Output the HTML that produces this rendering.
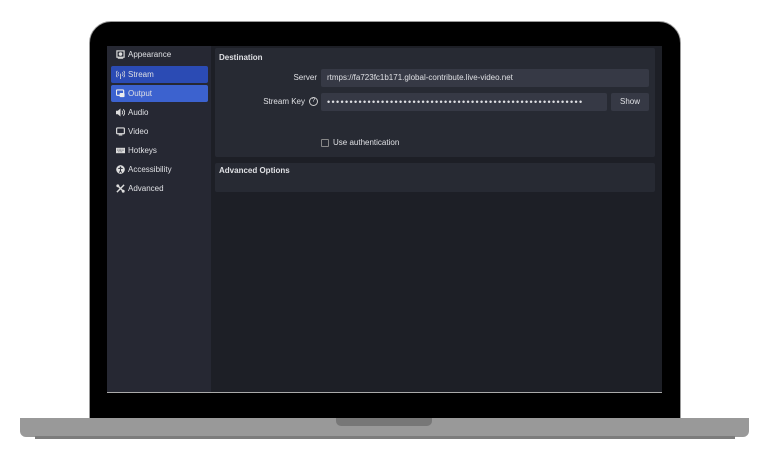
<!DOCTYPE html>
<html><head><style>
*{margin:0;padding:0;box-sizing:border-box}
body{width:768px;height:460px;background:#fff;position:relative;overflow:hidden;font-family:"Liberation Sans",sans-serif;font-size:8px;color:#dfe0e4}
.abs{position:absolute}
.lid{left:89px;top:21px;width:592px;height:400px;background:#000;border-radius:22px 22px 0 0;border:1px solid #9a9a9a}
.screen{left:107px;top:46px;width:555px;height:347px;background:#1d1f26;border-bottom:1px solid #aaa}
.side{left:107px;top:46px;width:104px;height:346px;background:#262833}
.item{position:absolute;left:111px;width:97px;height:17px;line-height:17px;padding-left:17px;border-radius:2px}
.ic{position:absolute;left:5px;top:4px;width:9px;height:9px}
.panel{background:#272a33;border-radius:2px}
.inp{background:#363945;border-radius:2px;height:18px;line-height:18px;padding-left:6px}
.lbl{text-align:right;width:100px;line-height:18px}
</style></head><body>
<div class="abs lid"></div>
<div class="abs screen"></div>
<div class="abs side"></div>
<div class="item" style="top:46px;"><svg class="ic" viewBox="0 0 10 10"><rect x="1" y="1" width="8" height="7" fill="none" stroke="#ddd" stroke-width="1.3"/><circle cx="5" cy="4.5" r="2" fill="#ddd"/><rect x="2" y="8.5" width="6" height="1.2" fill="#ddd"/></svg>Appearance</div>
<div class="item" style="top:66px;background:#2b4bb4"><svg class="ic" viewBox="0 0 10 10"><path d="M5 4v6M3 2.5a3 3 0 0 0 0 4M7 2.5a3 3 0 0 1 0 4M1.5 1a5 5 0 0 0 0 7M8.5 1a5 5 0 0 1 0 7" fill="none" stroke="#ddd" stroke-width=".9"/></svg>Stream</div>
<div class="item" style="top:85px;background:#3c62cf"><svg class="ic" viewBox="0 0 10 10"><rect x=".5" y="1" width="8" height="6" rx="1" fill="none" stroke="#eee" stroke-width="1.3"/><rect x="4" y="4.5" width="5.5" height="4.5" rx="1" fill="#eee"/></svg>Output</div>
<div class="item" style="top:104px;"><svg class="ic" viewBox="0 0 10 10"><path d="M0 3h2l3-2.5v9L2 7H0z" fill="#ddd"/><path d="M6.5 3a2.5 2.5 0 0 1 0 4M8 1.5a4.5 4.5 0 0 1 0 7" fill="none" stroke="#ddd" stroke-width="1"/></svg>Audio</div>
<div class="item" style="top:123px;"><svg class="ic" viewBox="0 0 10 10"><rect x=".7" y="1" width="8.6" height="6.5" rx="1" fill="none" stroke="#ddd" stroke-width="1.3"/><rect x="3" y="8.3" width="4" height="1.2" fill="#ddd"/></svg>Video</div>
<div class="item" style="top:142px;"><svg class="ic" viewBox="0 0 10 10"><rect x="0" y="2" width="10" height="6" fill="#ddd"/><path d="M1.5 3.5h7M1.5 5h7M2.5 6.5h5" stroke="#262833" stroke-width=".6" stroke-dasharray="1 .6"/></svg>Hotkeys</div>
<div class="item" style="top:161px;"><svg class="ic" viewBox="0 0 10 10"><circle cx="5" cy="5" r="4.8" fill="#ddd"/><circle cx="5" cy="2.6" r=".9" fill="#262833"/><path d="M2.5 4h5M5 4v2.5L3.7 8.5M5 6.5l1.3 2" stroke="#262833" stroke-width="1"/></svg>Accessibility</div>
<div class="item" style="top:180px;"><svg class="ic" viewBox="0 0 10 10"><path d="M1 1l8 8M9 1L1 9" stroke="#ddd" stroke-width="1.6"/><circle cx="2" cy="2" r="1.6" fill="#ddd"/><circle cx="8" cy="8" r="1.6" fill="#ddd"/></svg>Advanced</div>

<div class="abs panel" style="left:215px;top:48px;width:440px;height:109px"></div>
<div class="abs" style="left:219px;top:53px;font-weight:bold;font-size:8px">Destination</div>
<div class="abs lbl" style="left:217px;top:69px">Server</div>
<div class="abs inp" style="left:321px;top:69px;width:328px">rtmps://fa723fc1b171.global-contribute.live-video.net</div>
<div class="abs lbl" style="left:205px;top:93px">Stream Key</div>
<div class="abs" style="left:309px;top:97px;width:9px;height:9px;border:1px solid #ccc;border-radius:50%;font-size:6px;line-height:7px;text-align:center">?</div>
<div class="abs inp" style="left:321px;top:93px;width:286px;overflow:hidden;white-space:nowrap"><span style="font-size:9px;letter-spacing:1.35px">•••••••••••••••••••••••••••••••••••••••••••••••••••••••••</span></div>
<div class="abs inp" style="left:611px;top:93px;width:38px;padding:0;text-align:center">Show</div>
<div class="abs" style="left:321px;top:139px;width:8px;height:8px;border:1px solid #888;border-radius:1px"></div>
<div class="abs" style="left:333px;top:138px">Use authentication</div>
<div class="abs panel" style="left:215px;top:163px;width:440px;height:29px"></div>
<div class="abs" style="left:219px;top:166px;font-weight:bold">Advanced Options</div>

<div class="abs" style="left:20px;top:418px;width:729px;height:19px;background:#999;border-radius:0 0 6px 6px"></div>
<div class="abs" style="left:35px;top:436px;width:700px;height:3px;background:#7c7c7c"></div>
<div class="abs" style="left:336px;top:418px;width:96px;height:8px;background:#777;border-radius:0 0 5px 5px"></div>
</body></html>
